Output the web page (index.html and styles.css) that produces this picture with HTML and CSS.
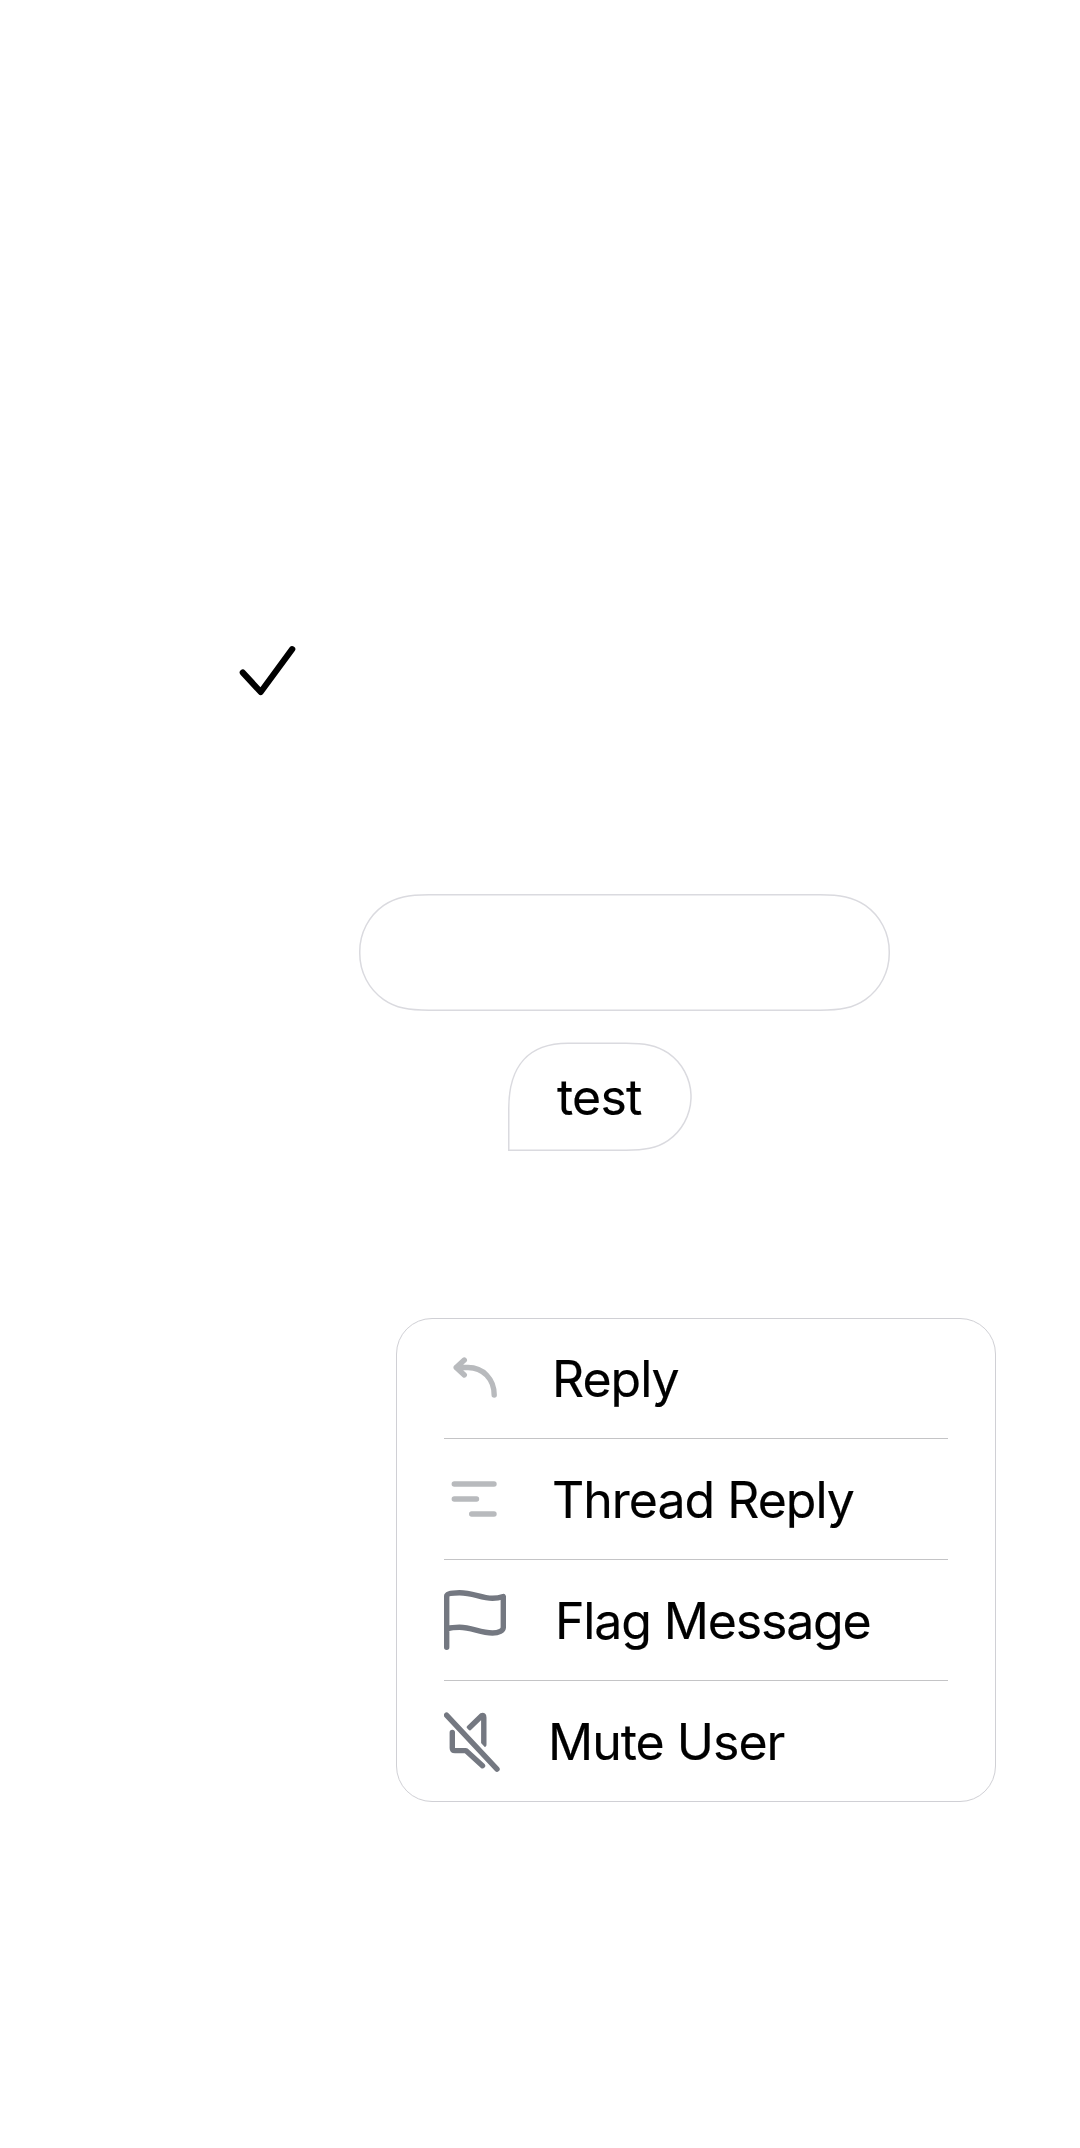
FILE: index.html
```html
<!DOCTYPE html>
<html lang="en">
<head>
<meta charset="utf-8">
<title>Message actions</title>
<link rel="stylesheet" href="styles.css">
</head>
<body>
<main class="screen">
  <svg class="check" width="100" height="80" viewBox="0 0 100 80" fill="none"><path d="M22.8 42.6 40.7 62 72.2 19.2"/></svg>

  <div class="pill">
    <svg class="outline" viewBox="0 0 531 117" fill="none"><path d="M.75 57.5A56.25 56.25 0 0 1 24.7 11.4C36.7 3 50 .75 70 .75H461C481 .75 494.3 3 506.3 11.4A56.25 56.25 0 0 1 530.25 57.5V59.5A56.25 56.25 0 0 1 506.3 105.6C494.3 114 481 116.25 461 116.25H70C50 116.25 36.7 114 24.7 105.6A56.25 56.25 0 0 1 .75 59.5Z"/></svg>
  </div>

  <div class="bubble">
    <svg class="outline" viewBox="0 0 184 109" fill="none"><path d="M.75 107.75V66C.75 24 20 .75 60 .75H118C136 .75 148.6 2.6 160.3 10.7A53.5 53.5 0 0 1 183 52.5V56A53.5 53.5 0 0 1 160.3 97.8C148.6 105.9 136 107.75 118 107.75Z"/></svg>
    <span class="bubble-text">test</span>
  </div>

  <ul class="menu">
    <li class="item">
      <svg class="icon light" width="60" height="60" viewBox="0 0 60 60" fill="none"><path d="M20.3 11 12.2 18.5 20.3 26M12.2 18.5H24C39 18.5 50.2 30 50.2 46"/></svg>
      <span class="label">Reply</span>
    </li>
    <li class="item">
      <svg class="icon light" width="60" height="60" viewBox="0 0 60 60" fill="none"><path d="M10.3 15H50M10.3 30H32.5M27.7 45H50"/></svg>
      <span class="label">Thread Reply</span>
    </li>
    <li class="item">
      <svg class="icon dark" width="62" height="60" viewBox="0 0 62 60" fill="none"><path d="M2.7 57.2V6C2.7 3.5 8 2.7 15.5 2.7C29 2.7 37 8.3 48.5 8.3C54 8.3 59.3 6.5 59.3 6.5V37.5C59.3 40.5 55 43 48.5 43C36 43 28 37.3 15.5 37.3C8 37.3 3.5 38.7 3.5 38.7"/></svg>
      <span class="label flag">Flag Message</span>
    </li>
    <li class="item">
      <svg class="icon dark" width="56" height="60" viewBox="0 0 56 60" fill="none"><path d="M25.3 15.7 37.7 3.7Q39.8 2.6 39.8 5.4V32.4M8.3 20.4V35.9Q8.3 38.6 11 38.6H21.8L38.5 53.7"/><path class="cut" d="M8 2.2 56 53.4"/><path class="cut" d="M2 6.8 46 54"/><path d="M2.5 3.1 53 57.1"/></svg>
      <span class="label">Mute User</span>
    </li>
  </ul>
</main>
</body>
</html>
```
FILE: styles.css
```css
* { box-sizing: border-box; }

body {
  margin: 0;
  background: #fff;
  color: #000;
  font-family: Inter, "Liberation Sans", sans-serif;
}

.screen {
  display: flex;
  flex-direction: column;
  align-items: flex-start;
  height: 2148px;
  padding-top: 630px;
}

.check {
  margin-left: 220px;
  stroke: #000;
  stroke-width: 6.2;
  stroke-linecap: round;
  stroke-linejoin: round;
}

.pill,
.bubble {
  display: grid;
}

.pill {
  width: 531px;
  height: 117px;
  margin: 184px 0 0 359px;
}

.bubble {
  width: 184px;
  height: 109px;
  margin: 31px 0 0 508px;
}

.outline {
  grid-area: 1 / 1;
  width: 100%;
  height: 100%;
  stroke: #dadadf;
  stroke-width: 1.5;
}

.bubble-text,
.label {
  font-size: 50px;
  letter-spacing: -1px;
  white-space: nowrap;
  -webkit-text-stroke: 0.15px #000;
}

.bubble-text {
  grid-area: 1 / 1;
  padding-left: 49px;
  letter-spacing: -0.8px;
  line-height: 110px;
}

.menu {
  width: 600px;
  height: 484px;
  margin: 167px 0 0 396px;
  padding: 0 48px;
  border: 1px solid #d0d0d5;
  border-radius: 36px;
  list-style: none;
}

.item {
  display: flex;
  align-items: center;
  gap: 48px;
  height: 121px;
  margin: 0 -1px;
  border-bottom: 1px solid #c4c4c6;
}

.item:first-child { height: 120px; }
.item:last-child { border-bottom: 0; }

.icon {
  flex: none;
  stroke-width: 5.4;
  stroke-linecap: round;
  stroke-linejoin: round;
}

.light { stroke: #b8babd; }
.dark { stroke: #747881; }

.cut {
  stroke: #fff;
  stroke-width: 3;
}

.label {
  padding-top: 1px;
  line-height: 60px;
}

.flag {
  padding-left: 1px;
  letter-spacing: -1.15px;
}
```
